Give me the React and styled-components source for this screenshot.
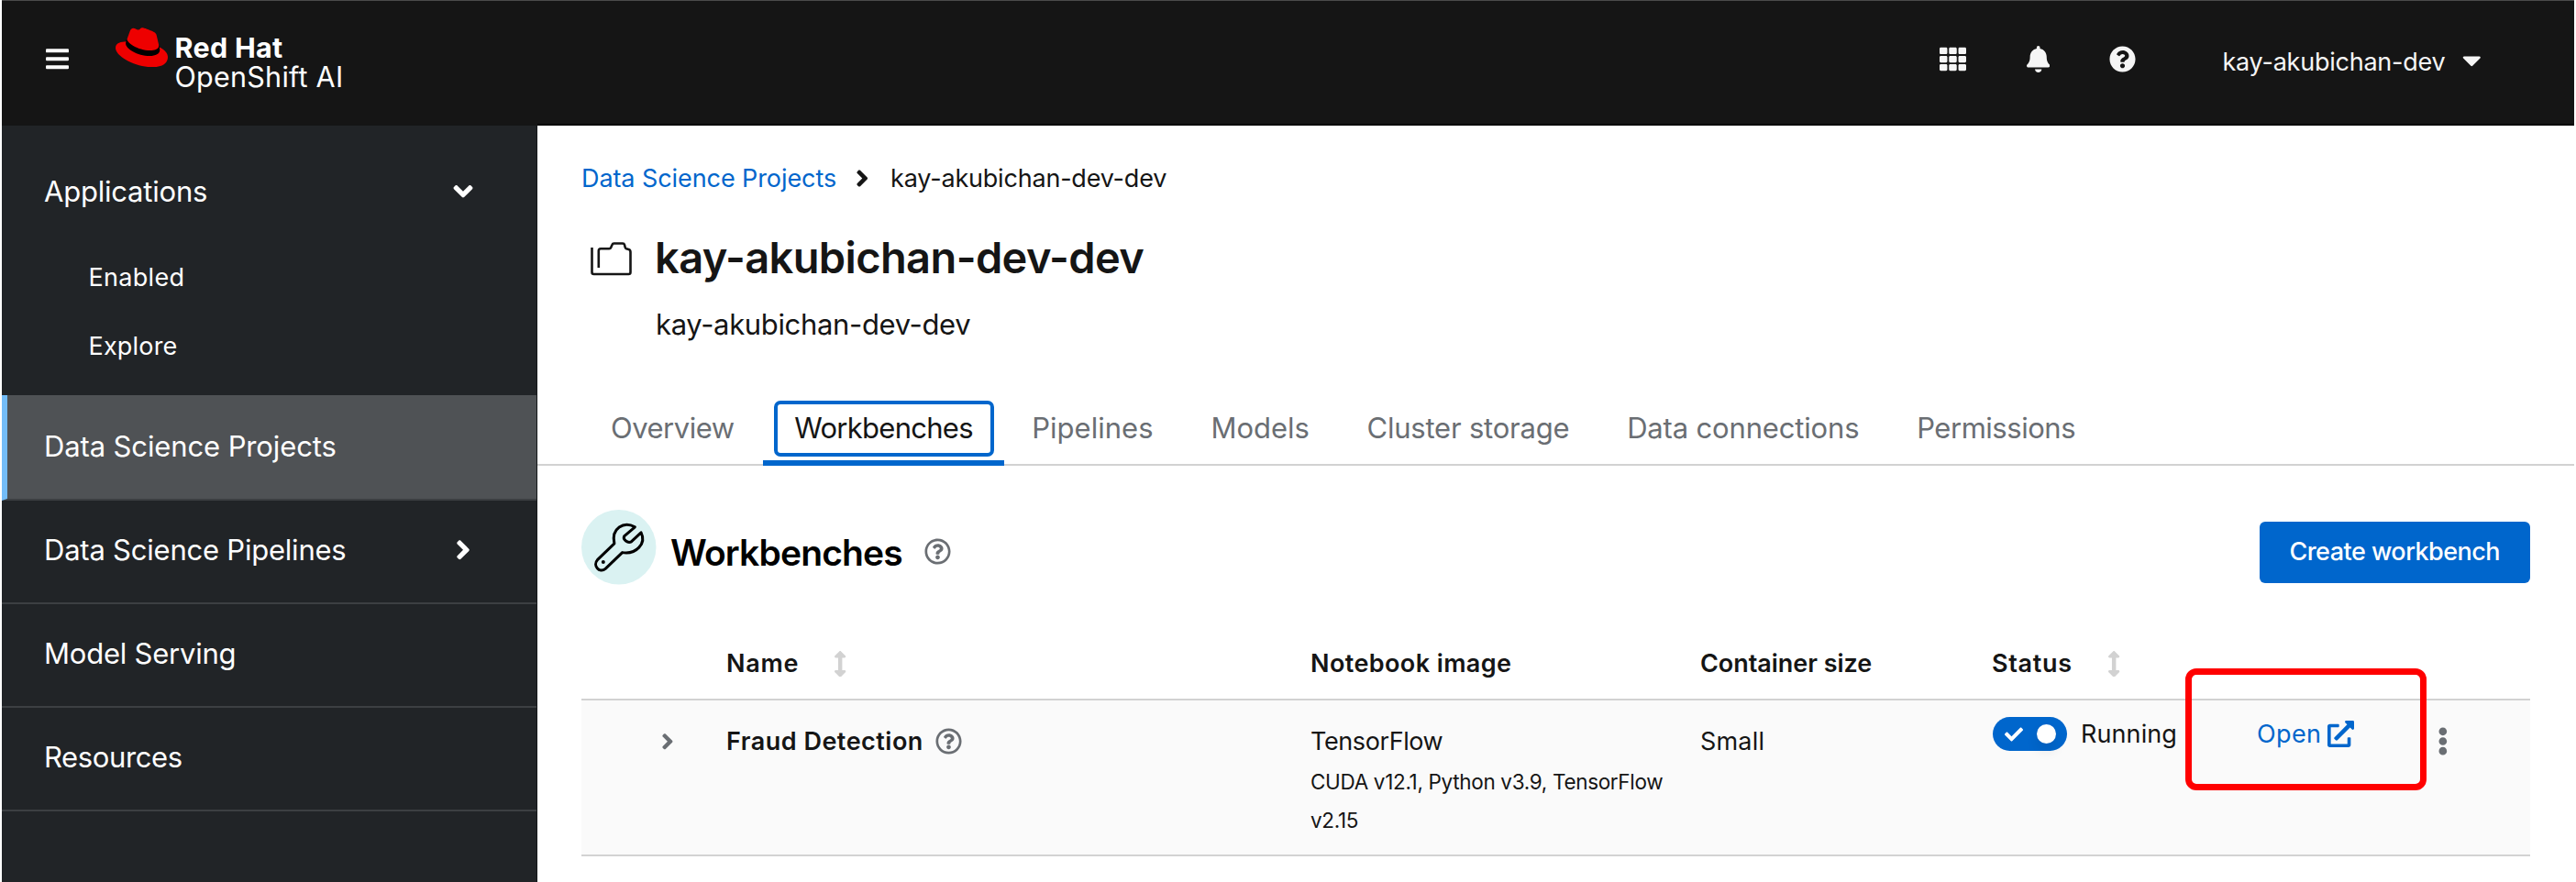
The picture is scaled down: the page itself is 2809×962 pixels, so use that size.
import React from 'react';
import styled, { createGlobalStyle, css } from 'styled-components';
import {
  FaAngleDown,
  FaAngleRight,
  FaArrowsAltV,
  FaBars,
  FaBell,
  FaCaretDown,
  FaCheck,
  FaEllipsisV,
  FaExternalLinkAlt,
  FaQuestionCircle,
  FaRegQuestionCircle,
  FaTh,
} from 'react-icons/fa';

const GlobalStyle = createGlobalStyle`
  *, *::before, *::after { box-sizing: border-box; }
  body {
    margin: 0;
    background: #fff;
    color: #151515;
    font-family: Inter, "Liberation Sans", sans-serif;
    font-size: 27px;
    overflow: hidden;
  }
  svg { display: block; flex: none; }
`;

const Page = styled.div`
  width: 2809px;
  height: 962px;
  padding: 0 2px;
  overflow: hidden;
`;

/* tracking in px */
const Label = styled.span`
  letter-spacing: ${(p) => p.$track || 0}px;
  white-space: nowrap;
`;

/* ---------- masthead ---------- */

const Masthead = styled.header`
  display: flex;
  align-items: flex-start;
  height: 137px;
  padding: 0 101px 0 48px;
  background: #151515;
  border-top: 1px solid #4b4b4b;
  color: #fff;
`;

const MenuToggle = styled.div`
  margin-top: 49px;
  font-size: 28.5px;

  svg { width: 25px; }
`;

const Brand = styled.div`
  display: flex;
  align-items: flex-start;
  margin: 29px 0 0 51px;
`;

const BrandText = styled.div`
  display: flex;
  flex-direction: column;
  margin: 5.5px 0 0 7.5px;
  font-size: 30.5px;
  line-height: 32.4px;
`;

const BrandName = styled(Label)`
  font-weight: 700;
`;

const Tools = styled.div`
  display: flex;
  align-items: center;
  margin: 46px 0 0 auto;
  height: 35px;
  font-size: 29px;
  color: #f5f5f5;
`;

const Tool = styled.div`
  margin-right: ${(p) => p.$gap}px;

  svg { width: ${(p) => p.$width || 29}px; }
`;

const UserMenu = styled.div`
  display: flex;
  align-items: center;
  gap: 19px;
  font-size: 27px;

  ${Label} { padding-top: 6px; }
  svg { font-size: 33px; width: 20.6px; margin-top: 2px; }
`;

/* ---------- sidebar ---------- */

const Body = styled.div`
  display: flex;
  height: 825px;
`;

const Sidebar = styled.nav`
  flex: none;
  width: 584px;
  padding-top: 15px;
  background: #212427;
  border-right: 1px solid #15181a;
  color: #fff;
`;

const NavItem = styled.div`
  display: flex;
  align-items: center;
  justify-content: space-between;
  height: 113px;
  padding: 0 69px 4px 46px;
  border-bottom: 2px solid #3c3f42;
  font-size: 31px;

  svg { font-size: 33.6px; width: 22px; }

  ${(p) => p.$group && css`
    border-bottom: 0;
    padding: 0 69px 0 46px;
  `}
  ${(p) => p.$active && css`
    height: 115px;
    padding-left: 40px;
    padding-bottom: 2px;
    background: #4f5255;
    background-clip: padding-box;
    border-left: 6px solid #73bcf7;
  `}
`;

const SubNav = styled.div`
  padding-bottom: 16px;
`;

const SubNavItem = styled.div`
  display: flex;
  align-items: center;
  height: 75px;
  padding-left: 94.5px;
`;

/* ---------- main ---------- */

const Main = styled.main`
  flex: 1;
  min-width: 0;
  margin-top: -2px;
  border-top: 2px solid #000;
  background: #fff;
`;

const Breadcrumb = styled.div`
  display: flex;
  align-items: center;
  height: 40px;
  margin: 37px 0 0 48px;

  svg { font-size: 29px; width: 14.5px; margin: 0 23.5px 0 21px; }
`;

const Crumb = styled(Label)`
  color: ${(p) => (p.$link ? '#06c' : '#151515')};
`;

const ProjectHeader = styled.div`
  display: flex;
  margin: 37px 0 0 57px;
  height: 125px;
`;

const ProjectText = styled.div`
  margin-left: 24px;
`;

const ProjectTitle = styled.h1`
  margin: 0 0 21px -1px;
  font-size: 47px;
  font-weight: 600;
  line-height: 60px;
  letter-spacing: -0.62px;
  white-space: nowrap;
`;

const ProjectSubtitle = styled.div`
  font-size: 31px;
  line-height: 44px;
  letter-spacing: -0.34px;
`;

const Tabs = styled.div`
  display: flex;
  height: 78px;
  margin-top: 54px;
  padding-left: 48.5px;
  border-bottom: 2px solid #d2d2d2;
`;

const Tab = styled.div`
  position: relative;
  display: flex;
  align-items: center;
  height: 78px;
  padding: 0 31.4px 5px;
  font-size: 31px;
  color: #6a6e73;

  ${(p) => p.$active && css`
    margin-right: -1px;
    padding: 0 34px;
    border-bottom: 6px solid #06c;
    color: #151515;

    &::after {
      content: '';
      position: absolute;
      top: 7px;
      left: 12px;
      right: 11px;
      height: 61px;
      border: 4px solid #06c;
      border-radius: 7px;
    }
  `}
`;

const Section = styled.section`
  padding: 48px 48.5px 0 48px;
`;

const SectionHeader = styled.div`
  display: flex;
  align-items: flex-start;
  height: 82px;
  margin-bottom: 47px;
`;

const SectionTitle = styled.h2`
  margin: 22px 24px 0 15.5px;
  font-size: 39px;
  font-weight: 600;
  line-height: 50px;
  letter-spacing: -0.85px;
  color: #000;
`;

const Help = styled.div`
  color: #6a6e73;
  font-size: 29px;
  margin-top: ${(p) => p.$top || 0}px;
`;

const PrimaryButton = styled.button`
  display: flex;
  align-items: center;
  justify-content: center;
  width: 294.5px;
  height: 67px;
  margin: 12.5px 0 0 auto;
  padding: 0 0 2px;
  border: 0;
  border-radius: 6px;
  background: #06c;
  color: #fff;
  font: 500 27px Inter, "Liberation Sans", sans-serif;
`;

const Row = styled.div`
  display: grid;
  grid-template-columns: 158px 637px 425px 318px 289px 198px 1fr;
  border-bottom: 2px solid #d2d2d2;
`;

const HeadRow = styled(Row)`
  align-items: center;
  height: 79px;
  font-weight: 600;
`;

const BodyRow = styled(Row)`
  align-items: start;
  height: 170px;
  padding-top: 21px;
  background: #fafafa;
  line-height: 47px;
`;

const HeadCell = styled.div`
  display: flex;
  align-items: center;
  gap: 38px;

  svg { font-size: 28.5px; width: 14.3px; color: #d2d2d2; margin-top: 1px; }
`;

const Cell = styled.div`
  display: flex;
  align-items: center;
  height: 47px;
  gap: ${(p) => p.$gap || 0}px;
  margin-top: ${(p) => p.$lift || 0}px;
`;

const NameCell = styled(Cell)`
  font-weight: 600;
`;

const ExpandCell = styled(Cell)`
  padding-left: 86.5px;
  color: #6a6e73;
  font-size: 27.5px;

  svg { width: 13.8px; }
`;

const ImageDetail = styled.div`
  width: 400px;
  font-size: 22.5px;
  line-height: 42px;
  letter-spacing: -0.33px;
`;

const Switch = styled.div`
  display: flex;
  align-items: center;
  justify-content: space-between;
  width: 81.5px;
  height: 37px;
  margin-left: 0.5px;
  padding: 0 12px 0 13px;
  border-radius: 19px;
  background: #06c;
  color: #fff;
  font-size: 20px;
`;

const Knob = styled.div`
  width: 21px;
  height: 21px;
  border-radius: 50%;
  background: #fff;
  box-shadow: 0 8px 14px rgba(0, 0, 0, 0.09);
`;

const OpenCell = styled(Cell)`
  position: relative;
  color: #06c;

  svg { font-size: 29px; }
`;

const Highlight = styled.div`
  position: absolute;
  top: -48px;
  left: -78px;
  width: 263px;
  height: 133px;
  border: 7px solid #f00;
  border-radius: 12px;
`;

const KebabCell = styled(Cell)`
  color: #6a6e73;
  font-size: 31px;

  svg { width: 11.7px; margin-left: -1px; }
`;

function Fedora() {
  return (
    <svg width="57" height="43.4" viewBox="0 2.9 24 18.2">
      <path fill="#000" d="M5 8.2 4.5 10.2c0 2.5 5.3 6 11.2 6 2.8 0 4.8-1.1 4.8-3L19.8 10.5z" />
      <path
        fill="#e00"
        d="M16.009 13.386c1.577 0 3.86-.326 3.86-2.202a1.765 1.765 0 0 0-.04-.431l-.94-4.08c-.216-.898-.406-1.305-1.982-2.093-1.223-.625-3.888-1.658-4.676-1.658-.733 0-.947.946-1.822.946-.842 0-1.467-.706-2.255-.706-.757 0-1.25.515-1.63 1.576 0 0-1.06 2.99-1.197 3.424a.81.81 0 0 0-.028.245c0 1.162 4.577 4.974 10.71 4.974m4.101-1.435c.218 1.032.218 1.14.218 1.277 0 1.765-1.984 2.745-4.593 2.745-5.895.004-11.06-3.451-11.06-5.734a2.326 2.326 0 0 1 .19-.925C2.746 9.415 0 9.794 0 12.217c0 3.969 9.405 8.861 16.851 8.861 5.71 0 7.149-2.582 7.149-4.62 0-1.605-1.387-3.425-3.887-4.512"
      />
    </svg>
  );
}

function ProjectIcon() {
  return (
    <svg width="48" height="60" viewBox="0 0 48 60" fill="none" stroke="#151515" strokeWidth="2.6" strokeLinejoin="round">
      <path d="M2.500 19v27q0 2 2 2h38q2 0 2-2V24q0-2.500-2-3l-2.500-.7q-1-.4-1.300-1.600l-.7-2.700q-.4-1.500-2-1.500H26.500q-1.500 0-2 1.500l-1.200 2.700q-.6 1.500-2 1.500H12q-2.200 0-2.200 2.200V41" />
    </svg>
  );
}

function WrenchBadge() {
  return (
    <svg width="81.500" height="81.500" viewBox="12 48 243 243">
      <circle cx="133.500" cy="169.500" r="121.500" fill="#daf2f2" />
      <g fill="none" stroke="#000" strokeWidth="9" strokeLinejoin="round">
        <path d="M186 104C150 84 108 108 119 158L64 211C48 228 70 256 90 240L145 187C190 194 224 158 206 122L174 152C163 158 146 145 151 134Z" />
      </g>
      <circle cx="83" cy="218" r="6" fill="#000" />
    </svg>
  );
}

const tabs = [
  { label: 'Overview', track: -0.46 },
  { label: 'Workbenches', track: -0.72, active: true },
  { label: 'Pipelines', track: 0.03 },
  { label: 'Models', track: -0.03 },
  { label: 'Cluster storage', track: -0.22 },
  { label: 'Data connections', track: -0.16 },
  { label: 'Permissions', track: -0.47 },
];

export default function App() {
  return (
    <Page>
      <GlobalStyle />
      <Masthead>
        <MenuToggle><FaBars /></MenuToggle>
        <Brand>
          <Fedora />
          <BrandText>
            <BrandName $track={0.3}>Red Hat</BrandName>
            <Label $track={0.25}>OpenShift AI</Label>
          </BrandText>
        </Brand>
        <Tools>
          <Tool $gap={66}><FaTh /></Tool>
          <Tool $gap={65} $width={25.4}><FaBell /></Tool>
          <Tool $gap={94.5}><FaQuestionCircle /></Tool>
          <UserMenu>
            <Label $track={-0.24}>kay-akubichan-dev</Label>
            <FaCaretDown />
          </UserMenu>
        </Tools>
      </Masthead>

      <Body>
        <Sidebar>
          <NavItem $group>
            <Label $track={-0.21}>Applications</Label>
            <FaAngleDown />
          </NavItem>
          <SubNav>
            <SubNavItem><Label $track={0.31}>Enabled</Label></SubNavItem>
            <SubNavItem><Label $track={0.18}>Explore</Label></SubNavItem>
          </SubNav>
          <NavItem $active><Label $track={-0.12}>Data Science Projects</Label></NavItem>
          <NavItem>
            <Label $track={-0.22}>Data Science Pipelines</Label>
            <FaAngleRight />
          </NavItem>
          <NavItem><Label $track={-0.22}>Model Serving</Label></NavItem>
          <NavItem><Label $track={-0.38}>Resources</Label></NavItem>
        </Sidebar>

        <Main>
          <Breadcrumb>
            <Crumb $link $track={-0.08}>Data Science Projects</Crumb>
            <FaAngleRight />
            <Crumb $track={-0.2}>kay-akubichan-dev-dev</Crumb>
          </Breadcrumb>

          <ProjectHeader>
            <ProjectIcon />
            <ProjectText>
              <ProjectTitle>kay-akubichan-dev-dev</ProjectTitle>
              <ProjectSubtitle>kay-akubichan-dev-dev</ProjectSubtitle>
            </ProjectText>
          </ProjectHeader>

          <Tabs>
            {tabs.map((t) => (
              <Tab key={t.label} $active={t.active}>
                <Label $track={t.track}>{t.label}</Label>
              </Tab>
            ))}
          </Tabs>

          <Section>
            <SectionHeader>
              <WrenchBadge />
              <SectionTitle>Workbenches</SectionTitle>
              <Help $top={30.5}><FaRegQuestionCircle /></Help>
              <PrimaryButton><Label $track={-0.52}>Create workbench</Label></PrimaryButton>
            </SectionHeader>

            <HeadRow>
              <HeadCell />
              <HeadCell><Label $track={0.7}>Name</Label><FaArrowsAltV /></HeadCell>
              <HeadCell><Label $track={0.4}>Notebook image</Label></HeadCell>
              <HeadCell><Label $track={-0.04}>Container size</Label></HeadCell>
              <HeadCell><Label $track={0.7}>Status</Label><FaArrowsAltV /></HeadCell>
            </HeadRow>

            <BodyRow>
              <ExpandCell><FaAngleRight /></ExpandCell>
              <NameCell $gap={13}>
                <Label $track={0.5}>Fraud Detection</Label>
                <Help><FaRegQuestionCircle /></Help>
              </NameCell>
              <div>
                <Label $track={-0.4}>TensorFlow</Label>
                <ImageDetail>CUDA v12.1, Python v3.9, TensorFlow v2.15</ImageDetail>
              </div>
              <Cell><Label $track={0.2}>Small</Label></Cell>
              <Cell $gap={15} $lift={-8}>
                <Switch><FaCheck /><Knob /></Switch>
                <Label $track={0.1}>Running</Label>
              </Cell>
              <OpenCell $gap={6.5} $lift={-8}>
                <Label $track={0.4}>Open</Label>
                <FaExternalLinkAlt />
                <Highlight />
              </OpenCell>
              <KebabCell><FaEllipsisV /></KebabCell>
            </BodyRow>
          </Section>
        </Main>
      </Body>
    </Page>
  );
}
